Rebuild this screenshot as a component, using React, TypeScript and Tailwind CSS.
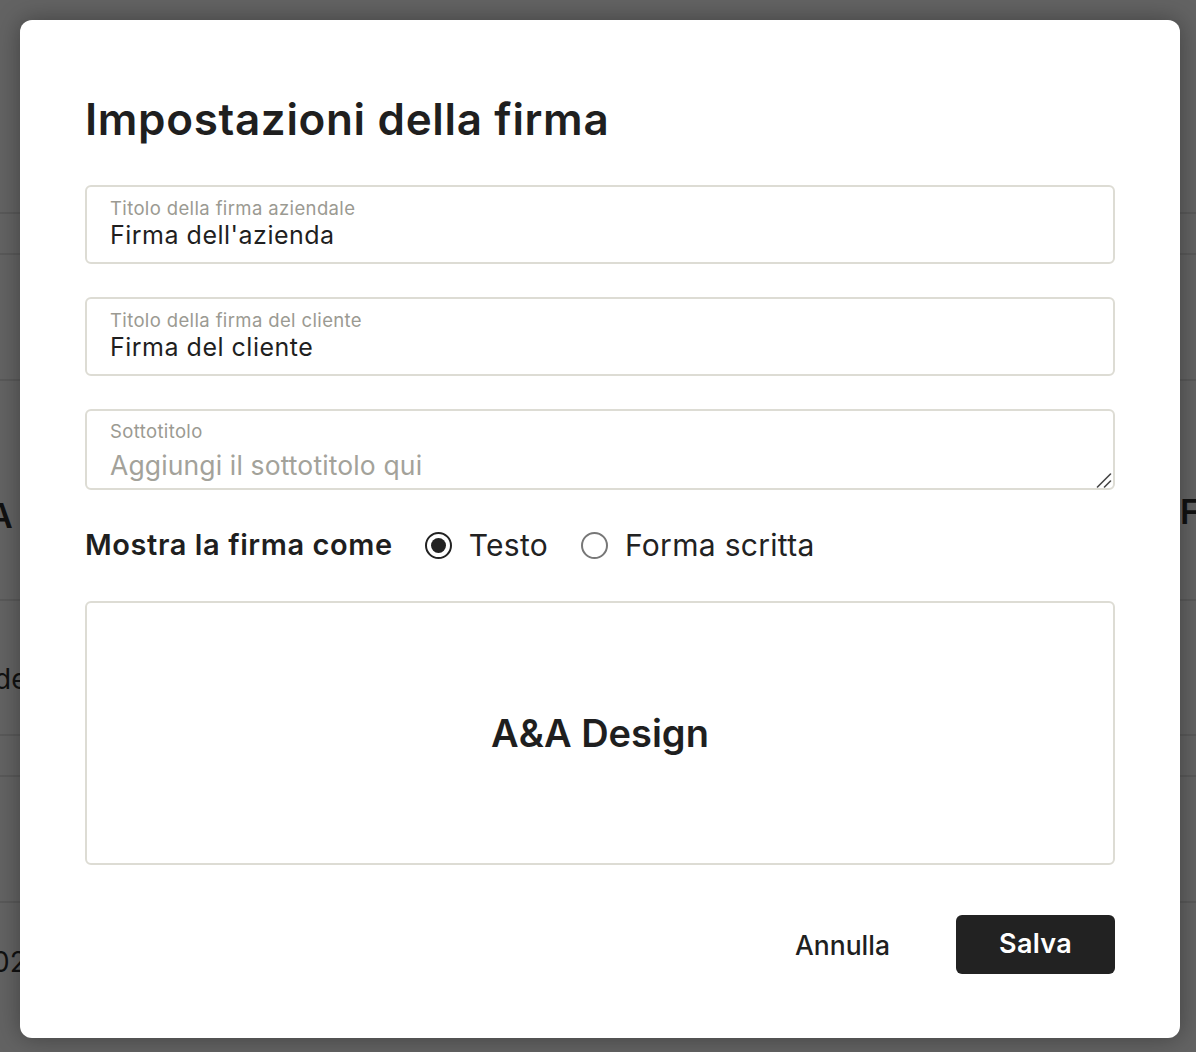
import React from "react";

function Field({ label, value }: { label: string; value: string }) {
  return (
    <div className="flex h-[79px] w-full flex-col rounded-[6px] border-2 border-[#dddcd4] bg-white pl-[23px] pt-[9px]">
      <span className="text-[18.5px] leading-[24px] tracking-[0.02em] text-[#9b9a92]">{label}</span>
      <span className="text-[25px] leading-[31px] tracking-[0.02em] text-[#1f1f1f]">{value}</span>
    </div>
  );
}

function Radio({ checked, label }: { checked: boolean; label: string }) {
  return (
    <label className="flex items-center gap-[17px]">
      {checked ? (
        <span className="flex h-[27px] w-[27px] items-center justify-center rounded-full border-[2.5px] border-[#222]">
          <span className="h-[15px] w-[15px] rounded-full bg-[#222]" />
        </span>
      ) : (
        <span className="h-[27px] w-[27px] rounded-full border-2 border-[#777]" />
      )}
      <span className="text-[30px] leading-[36px] tracking-[0.01em] text-[#222]">{label}</span>
    </label>
  );
}

export default function App() {
  const font = { fontFamily: "Inter, 'Noto Sans', sans-serif" };
  return (
    <div className="relative h-[1052px] w-[1196px] overflow-hidden bg-[#636363]" style={font}>
      {/* dimmed page behind */}
      <div className="absolute left-0 right-0 top-[212px] h-[2px] bg-[#595959]" />
      <div className="absolute left-0 right-0 top-[253px] h-[2px] bg-[#595959]" />
      <div className="absolute left-0 right-0 top-[379px] h-[2px] bg-[#595959]" />
      <div className="absolute left-0 right-0 top-[599px] h-[2px] bg-[#595959]" />
      <div className="absolute left-0 right-0 top-[734px] h-[2px] bg-[#595959]" />
      <div className="absolute left-0 right-0 top-[775px] h-[2px] bg-[#595959]" />
      <div className="absolute left-0 right-0 top-[901px] h-[2px] bg-[#595959]" />
      <span className="absolute left-[-12px] top-[490px] text-[34px] font-semibold text-[#111]">A</span>
      <span className="absolute left-[-6px] top-[658px] text-[28px] text-[#111]">de</span>
      <span className="absolute left-[-8px] top-[941px] text-[28px] text-[#111]">02</span>
      <span className="absolute left-[1180px] top-[486px] text-[34px] font-semibold text-[#111]">F</span>

      <div className="relative p-[20px]">
        <div className="flex h-[1018px] w-[1160px] flex-col rounded-[12px] bg-white px-[65px] pt-[73px] shadow-[0_0_24px_rgba(0,0,0,0.35)]">
          <h1 className="text-[44px] font-semibold leading-[52px] tracking-[0.015em] text-[#1f1f1f]">
            Impostazioni della firma
          </h1>

          <div className="mt-[40px] flex flex-col gap-[33px]">
            <Field label="Titolo della firma aziendale" value="Firma dell'azienda" />
            <Field label="Titolo della firma del cliente" value="Firma del cliente" />
            <div className="relative h-[81px] w-full">
              <span className="pointer-events-none absolute left-[25px] top-[10px] text-[18.5px] leading-[24px] tracking-[0.02em] text-[#9b9a92]">
                Sottotitolo
              </span>
              <textarea
                className="block h-[81px] w-full resize-none rounded-[6px] border-2 border-[#dddcd4] bg-white pl-[23px] pt-[37px] text-[26.5px] leading-[34px] tracking-[0.005em] text-[#222] outline-none placeholder:text-[#a3a29a]"
                placeholder="Aggiungi il sottotitolo qui"
                style={font}
              />
              <svg className="pointer-events-none absolute bottom-[2px] right-[3px]" width="16" height="16" viewBox="0 0 16 16">
                <path d="M1.5 15 L14.5 2" stroke="#444" strokeWidth="1.6" strokeLinecap="round" />
                <path d="M8.5 15 L14.5 9" stroke="#444" strokeWidth="1.6" strokeLinecap="round" />
              </svg>
            </div>
          </div>

          <div className="mt-[37px] flex items-center">
            <span className="text-[29px] font-semibold leading-[36px] tracking-[0.02em] text-[#1f1f1f]">Mostra la firma come</span>
            <div className="ml-[32px] flex items-center gap-[33px]">
              <Radio checked label="Testo" />
              <Radio checked={false} label="Forma scritta" />
            </div>
          </div>

          <div className="mt-[38px] flex h-[264px] w-full items-center justify-center rounded-[6px] border-2 border-[#dddcd4]">
            <span className="text-[38px] font-semibold leading-[46px] text-[#1f1f1f]">A&amp;A Design</span>
          </div>

          <div className="mt-[50px] flex items-center justify-end">
            <button className="mr-[66px] text-[26.5px] font-medium leading-[32px] text-[#1f1f1f]">Annulla</button>
            <button className="flex h-[59px] w-[159px] items-center justify-center rounded-[6px] bg-[#222222] text-[27px] font-semibold tracking-[0.01em] text-white">
              Salva
            </button>
          </div>
        </div>
      </div>
    </div>
  );
}
